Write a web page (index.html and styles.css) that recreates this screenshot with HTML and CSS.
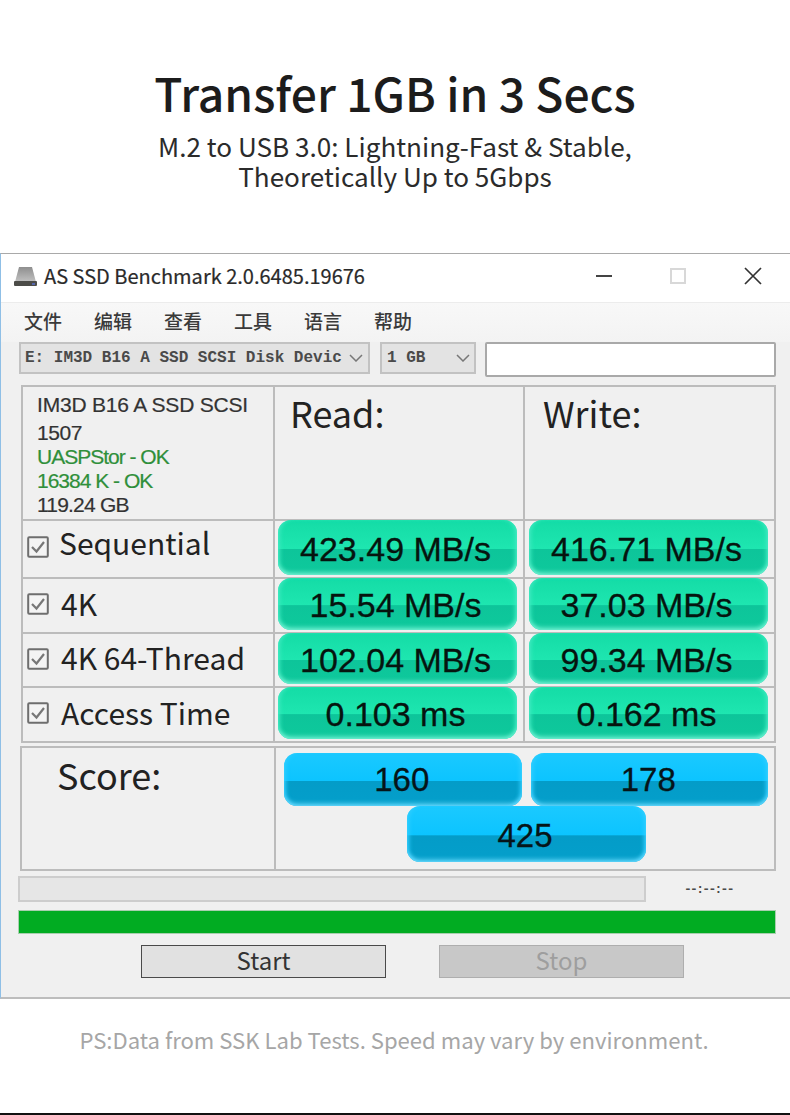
FILE: index.html
```html
<!DOCTYPE html>
<html lang="en">
<head>
<meta charset="utf-8">
<title>Transfer 1GB in 3 Secs</title>
<link rel="stylesheet" href="styles.css">
</head>
<body>
<header class="hero">
  <h1 class="hero-title">Transfer 1GB in 3 Secs</h1>
  <p class="hero-sub">M.2 to USB 3.0: Lightning-Fast &amp; Stable,<br>Theoretically Up to 5Gbps</p>
</header>
<main class="window">
  <div class="titlebar">
    <svg class="app-icon" width="25" height="21" viewBox="0 0 25 21"><defs><linearGradient id="hdd" x1="0" y1="0" x2="0" y2="1"><stop offset="0" stop-color="#8e8e8e"/><stop offset="1" stop-color="#c2c2c2"/></linearGradient></defs><path d="M6 1h13l4 15H2z" fill="url(#hdd)"/><rect x="1" y="15" width="23" height="5" rx="1" fill="#4c4c48"/><rect x="19" y="17" width="3" height="2" fill="#5566aa"/></svg>
    <span class="app-name">AS SSD Benchmark 2.0.6485.19676</span>
    <div class="win-controls">
      <svg width="18" height="18" viewBox="0 0 18 18"><path d="M0 9h16" stroke="#444" stroke-width="2"/></svg>
      <svg width="18" height="18" viewBox="0 0 18 18"><rect x="1" y="2" width="14" height="14" fill="none" stroke="#d8d8d8" stroke-width="2"/></svg>
      <svg width="18" height="18" viewBox="0 0 18 18"><path d="M1 1l16 16M17 1L1 17" stroke="#333" stroke-width="1.7"/></svg>
    </div>
  </div>
  <div class="content">
    <nav class="menu">
      <span>文件</span><span>编辑</span><span>查看</span><span>工具</span><span>语言</span><span>帮助</span>
    </nav>
    <div class="toolbar">
      <div class="select select-drive"><span>E: IM3D B16 A SSD SCSI Disk Devic</span>
        <svg width="14" height="8" viewBox="0 0 14 8"><path d="M1 1l6 6 6-6" fill="none" stroke="#777" stroke-width="1.5"/></svg></div>
      <div class="select select-size"><span>1 GB</span>
        <svg width="14" height="8" viewBox="0 0 14 8"><path d="M1 1l6 6 6-6" fill="none" stroke="#777" stroke-width="1.5"/></svg></div>
      <div class="name-input"></div>
    </div>
    <section class="bench">
      <div class="cell info">
        <div class="info-name">IM3D B16 A SSD SCSI</div>
        <div class="info-fw">1507</div>
        <div class="info-ok">UASPStor - OK</div>
        <div class="info-ok">16384 K - OK</div>
        <div class="info-size">119.24 GB</div>
      </div>
      <div class="cell col-head col-read">Read:</div>
      <div class="cell col-head col-write">Write:</div>

      <div class="cell row-label row-seq"><svg class="check" viewBox="0 0 22 22"><rect x="1.2" y="1.2" width="19.6" height="19.6" rx="1" fill="#f4f4f4" stroke="#6e6e6e" stroke-width="2"/><path d="M5 11l4.5 4.5L17 6" fill="none" stroke="#777" stroke-width="2.2"/></svg><span>Sequential</span></div>
      <div class="cell val"><div class="pill green">423.49 MB/s</div></div>
      <div class="cell val val-write"><div class="pill green">416.71 MB/s</div></div>

      <div class="cell row-label row-4k"><svg class="check" viewBox="0 0 22 22"><rect x="1.2" y="1.2" width="19.6" height="19.6" rx="1" fill="#f4f4f4" stroke="#6e6e6e" stroke-width="2"/><path d="M5 11l4.5 4.5L17 6" fill="none" stroke="#777" stroke-width="2.2"/></svg><span>4K</span></div>
      <div class="cell val"><div class="pill green">15.54 MB/s</div></div>
      <div class="cell val val-write"><div class="pill green">37.03 MB/s</div></div>

      <div class="cell row-label row-64"><svg class="check" viewBox="0 0 22 22"><rect x="1.2" y="1.2" width="19.6" height="19.6" rx="1" fill="#f4f4f4" stroke="#6e6e6e" stroke-width="2"/><path d="M5 11l4.5 4.5L17 6" fill="none" stroke="#777" stroke-width="2.2"/></svg><span>4K 64-Thread</span></div>
      <div class="cell val"><div class="pill green">102.04 MB/s</div></div>
      <div class="cell val val-write"><div class="pill green">99.34 MB/s</div></div>

      <div class="cell row-label row-acc"><svg class="check" viewBox="0 0 22 22"><rect x="1.2" y="1.2" width="19.6" height="19.6" rx="1" fill="#f4f4f4" stroke="#6e6e6e" stroke-width="2"/><path d="M5 11l4.5 4.5L17 6" fill="none" stroke="#777" stroke-width="2.2"/></svg><span>Access Time</span></div>
      <div class="cell val"><div class="pill green">0.103 ms</div></div>
      <div class="cell val val-write"><div class="pill green">0.162 ms</div></div>
    </section>
    <section class="score">
      <div class="score-label">Score:</div>
      <div class="score-values">
        <div class="score-pair">
          <div class="pill blue">160</div>
          <div class="pill blue">178</div>
        </div>
        <div class="pill blue score-total">425</div>
      </div>
    </section>
    <div class="progress-row">
      <div class="progress-track"></div>
      <div class="time">--:--:--</div>
    </div>
    <div class="green-bar"></div>
    <div class="actions">
      <div class="btn btn-start">Start</div>
      <div class="btn btn-stop">Stop</div>
    </div>
  </div>
</main>
<footer class="note">PS:Data from SSK Lab Tests. Speed may vary by environment.</footer>
</body>
</html>
```

FILE: styles.css
```css
* { box-sizing: border-box; }
html, body { margin: 0; padding: 0; }
body {
  width: 790px;
  height: 1115px;
  overflow: hidden;
  background: #fff;
  font-family: "Noto Sans CJK SC", "Noto Sans", sans-serif;
  color: #222;
  display: flex;
  flex-direction: column;
}
.hero { height: 253px; padding-top: 60px; text-align: center; flex: none; }
.hero-title { margin: 0; font-size: 46.2px; line-height: 64px; font-weight: 500; color: #1c1c1c; }
.hero-sub { margin: 7px 0 0; font-size: 26.1px; line-height: 30px; color: #2b2b2b; }

.window {
  flex: none;
  height: 746px;
  border-top: 1px solid #a9a9a9;
  border-bottom: 2px solid #bdbdbd;
  border-left: 1px solid #8fbfe6;
  background: #f0f0f0;
}
.titlebar {
  height: 49px;
  background: #fff;
  display: flex;
  align-items: center;
  padding-left: 12px;
  padding-bottom: 4px;
  border-bottom: 1px solid #ececec;
}
.app-icon { flex: none; margin-right: 6px; }
.app-name { font-size: 20px; color: #2a2a2a; line-height: 1; -webkit-text-stroke: 0.2px #2a2a2a; }
.win-controls { margin-left: auto; display: flex; gap: 56px; padding-right: 28px; }
.content { padding-left: 17px; }

.menu {
  height: 39px;
  display: flex;
  gap: 32px;
  align-items: center;
  padding: 0 0 5px 23px;
  margin-left: -17px;
  font-size: 19px;
  font-weight: 500;
  color: #3a3a3a;
  background: linear-gradient(#f8f8f8, #f3f3f3);
}
.toolbar { display: flex; align-items: flex-start; padding-left: 1px; height: 43px; }
.select {
  height: 32px;
  background: #e3e3e3;
  border: 2px solid #c2c2c2;
  display: flex;
  align-items: center;
  justify-content: space-between;
  padding: 0 5px 0 4px;
  font-family: "Liberation Mono", monospace;
  font-size: 16px;
  font-weight: 700;
  color: #4a4a4a;
  white-space: pre;
}
.select-drive { width: 351px; }
.select-size { width: 96px; margin-left: 10px; padding-left: 5px; padding-right: 4px; }
.name-input {
  width: 291px;
  height: 35px;
  margin-left: 9px;
  background: #fff;
  border: 2px solid #a9a9a9;
  border-radius: 2px;
}

.bench {
  display: grid;
  grid-template-columns: 252px 250px 251px;
  grid-template-rows: 134px 58px 55px 54px 55px;
  margin-left: 3px;
  width: 755px;
  border-right: 2px solid #bcbcbc;
  border-bottom: 2px solid #bcbcbc;
}
.cell { border-top: 2px solid #bcbcbc; border-left: 2px solid #bcbcbc; min-width: 0; }
.info {
  padding: 2px 0 0 14px;
  font-family: "Liberation Sans", Arial, sans-serif;
  font-size: 21px;
  letter-spacing: -0.2px;
  color: #333;
  -webkit-text-stroke: 0.2px #333;
}
.info-name { line-height: 31px; }
.info-fw { line-height: 25px; letter-spacing: -0.4px; }
.info-ok { line-height: 24px; color: #2f8f3a; letter-spacing: -1px; -webkit-text-stroke: 0.2px #2f8f3a; }
.info-size { line-height: 24px; letter-spacing: -0.8px; }
.col-head { font-size: 36px; line-height: 50px; color: #222; }
.col-read { padding-left: 15px; }
.col-write { padding-left: 18px; }

.row-label { display: flex; align-items: center; font-size: 30px; color: #222; padding-left: 4px; }
.row-label span { position: relative; top: -1px; }
.row-seq { padding-bottom: 4px; }
.row-seq span { margin-left: -2px; top: -5px; }
.row-4k { padding-bottom: 3px; }
.row-64 { padding-bottom: 3px; }
.row-64 span { top: -2px; }
.row-acc { padding-bottom: 4px; }
.check { width: 22px; height: 22px; flex: none; margin-right: 12px; }
.val { padding: 0 6px 2px 3px; display: flex; }
.val-write { padding: 0 6px 2px 4px; }
.val .pill { margin-top: -1px; padding: 3px 4px 0 0; }
.pill {
  flex: 1;
  display: flex;
  align-items: center;
  justify-content: center;
  border-radius: 13px;
  font-family: "Liberation Sans", Arial, sans-serif;
  font-size: 34px;
  color: #06140f;
  -webkit-text-stroke: 0.3px #06140f;
  white-space: nowrap;
}
.green {
  background: linear-gradient(#14dca6 0%, #1ee6b0 52%, #0dc59a 53%, #0ec99c 100%);
  box-shadow: inset 0 -5px 5px -3px #7af3d6, inset 4px 0 4px -2px #3eeac0, inset -4px 0 4px -2px #3eeac0;
}
.blue {
  background: linear-gradient(#1bc9ff 0%, #0cc4ff 52%, #049cc8 53%, #049fcb 100%);
  box-shadow: inset 0 -5px 5px -3px #6fdcff, inset 4px 0 4px -2px #30ceff, inset -4px 0 4px -2px #30ceff;
  color: #06141a;
  font-size: 33px;
  padding: 0 2px 0 0;
}

.score {
  margin: 3px 0 0 2px;
  width: 756px;
  height: 125px;
  border: 2px solid #bcbcbc;
  display: grid;
  grid-template-columns: 252px 1fr;
}
.score-label { font-size: 36px; line-height: 52px; padding-left: 35px; color: #222; }
.score-values {
  border-left: 2px solid #bcbcbc;
  padding: 5px 6px 0 8px;
  display: flex;
  flex-direction: column;
  align-items: center;
}
.score-pair { display: flex; gap: 9px; width: 100%; height: 53px; }
.score-total { flex: none; width: 239px; height: 56px; padding-top: 3px; }

.progress-row { display: flex; align-items: center; margin-top: 5px; height: 26px; }
.progress-track { width: 628px; height: 26px; background: #e6e6e6; border: 2px solid #cdcdcd; }
.time { margin-left: 38px; font-family: "Liberation Mono", monospace; font-size: 13px; color: #4a4a4a; font-weight: 700; letter-spacing: -1.7px; }
.green-bar { width: 758px; height: 24px; margin-top: 8px; background: #01ac22; border: 1px solid #a8cfae; }
.actions { display: flex; gap: 53px; margin-top: 11px; padding-left: 123px; }
.btn {
  width: 245px;
  height: 33px;
  display: flex;
  align-items: center;
  justify-content: center;
  font-size: 24px;
  line-height: 1;
  padding-bottom: 3px;
}
.btn-start { background: #e1e1e1; border: 1px solid #4a4a4a; color: #333; }
.btn-stop { background: #c8c8c8; border: 1px solid #aeaeae; color: #9e9e9e; }

.note {
  flex: none;
  height: 116px;
  padding: 24px 2px 0 0;
  border-bottom: 2px solid #111;
  text-align: center;
  font-size: 22.1px;
  line-height: 32px;
  color: #a6a6a6;
}
```
